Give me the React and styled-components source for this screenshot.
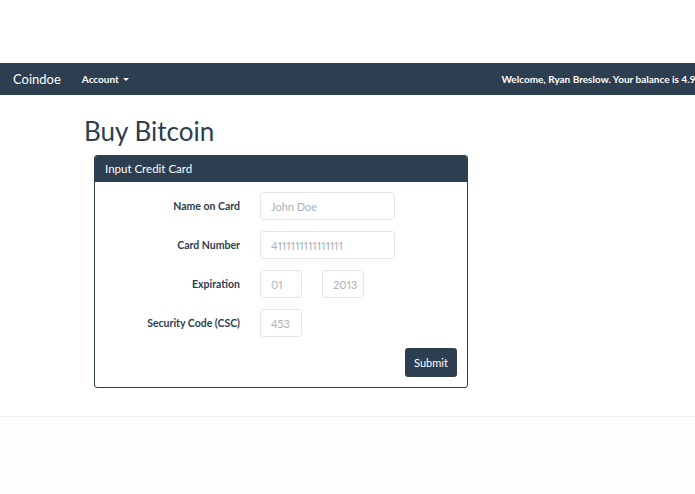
import React from 'react'
import styled, { createGlobalStyle } from 'styled-components'

const Global = createGlobalStyle`
  html, body { margin: 0; padding: 0; background: #fff; overflow: hidden; }
  body {
    font-family: Lato, "Open Sans", "Liberation Sans", sans-serif;
    font-variant-numeric: proportional-nums;
    color: #2c3e50;
  }
`

const Page = styled.div`
  width: 695px;
  height: 494px;
  display: flex;
  flex-direction: column;
  padding-top: 63px;
  box-sizing: border-box;
`

const Navbar = styled.div`
  height: 32px;
  background: #2c3e50;
  overflow: hidden;
  flex-shrink: 0;
`

// the page is wider than the window, so the welcome line runs off the right edge
const NavInner = styled.div`
  width: 735px;
  height: 100%;
  display: flex;
  align-items: center;
  padding: 0 13px;
  box-sizing: border-box;
  color: #fff;
  white-space: nowrap;
`

const Brand = styled.div`
  font-size: 13px;
  margin-right: 21px;
`

const NavLink = styled.div`
  font-size: 10px;
  font-weight: 700;
  display: flex;
  align-items: center;
  gap: 4px;
`

const Caret = styled.span`
  width: 0;
  height: 0;
  border-left: 3px solid transparent;
  border-right: 3px solid transparent;
  border-top: 3px solid #fff;
  margin-top: 1px;
`

const Welcome = styled.div`
  margin-left: auto;
  font-size: 10px;
  font-weight: 700;
`

const Main = styled.div`
  padding: 19px 0 0 84px;
  height: 321px;
  box-sizing: border-box;
  flex-shrink: 0;
`

const Title = styled.h1`
  margin: 0 0 7px 0;
  font-size: 26px;
  font-weight: 400;
  line-height: 34px;
  color: #2c3e50;
`

const Panel = styled.div`
  margin-left: 10px;
  width: 374px;
  border: 1px solid #2c3e50;
  border-radius: 3px;
  box-sizing: border-box;
  overflow: hidden;
`

const PanelHead = styled.div`
  background: #2c3e50;
  color: #fff;
  font-size: 11.5px;
  height: 26px;
  line-height: 26px;
  padding-left: 10px;
`

const PanelBody = styled.div`
  padding: 10px 10px 10px 0;
  display: flex;
  flex-direction: column;
  gap: 11px;
`

const Row = styled.div`
  display: grid;
  grid-template-columns: 145px 1fr;
  column-gap: 20px;
  align-items: center;
`

const Label = styled.label`
  text-align: right;
  font-size: 10.5px;
  font-weight: 700;
  color: #2c3e50;
`

const Fields = styled.div`
  display: flex;
  gap: 20px;
`

const Input = styled.input`
  width: ${p => p.$w}px;
  height: 28px;
  box-sizing: border-box;
  border: 1px solid #e4e7ea;
  border-radius: 3px;
  padding: 0 6px 0 10px;
  font-family: inherit;
  font-variant-numeric: proportional-nums;
  font-size: 11px;
  outline: none;
  &::placeholder { color: #aab2ba; }
`

const Actions = styled.div`
  display: flex;
  justify-content: flex-end;
`

const Button = styled.button`
  width: 52px;
  height: 29px;
  background: #2c3e50;
  color: #fff;
  border: none;
  border-radius: 3px;
  font-family: inherit;
  font-size: 11px;
`

const Footer = styled.div`
  flex: 1;
  border-top: 1px solid #eceeef;
  background: #fdfdfd;
`

export default function App() {
  return (
    <Page>
      <Global />
      <Navbar>
        <NavInner>
          <Brand>Coindoe</Brand>
          <NavLink>Account <Caret /></NavLink>
          <Welcome>Welcome, Ryan Breslow. Your balance is 4.95 BTC</Welcome>
        </NavInner>
      </Navbar>
      <Main>
        <Title>Buy Bitcoin</Title>
        <Panel>
          <PanelHead>Input Credit Card</PanelHead>
          <PanelBody>
            <Row>
              <Label>Name on Card</Label>
              <Fields><Input $w={135} placeholder="John Doe" /></Fields>
            </Row>
            <Row>
              <Label>Card Number</Label>
              <Fields><Input $w={135} placeholder="4111111111111111" /></Fields>
            </Row>
            <Row>
              <Label>Expiration</Label>
              <Fields>
                <Input $w={42} placeholder="01" />
                <Input $w={42} placeholder="2013" />
              </Fields>
            </Row>
            <Row>
              <Label>Security Code (CSC)</Label>
              <Fields><Input $w={42} placeholder="453" /></Fields>
            </Row>
            <Actions><Button>Submit</Button></Actions>
          </PanelBody>
        </Panel>
      </Main>
      <Footer />
    </Page>
  )
}
